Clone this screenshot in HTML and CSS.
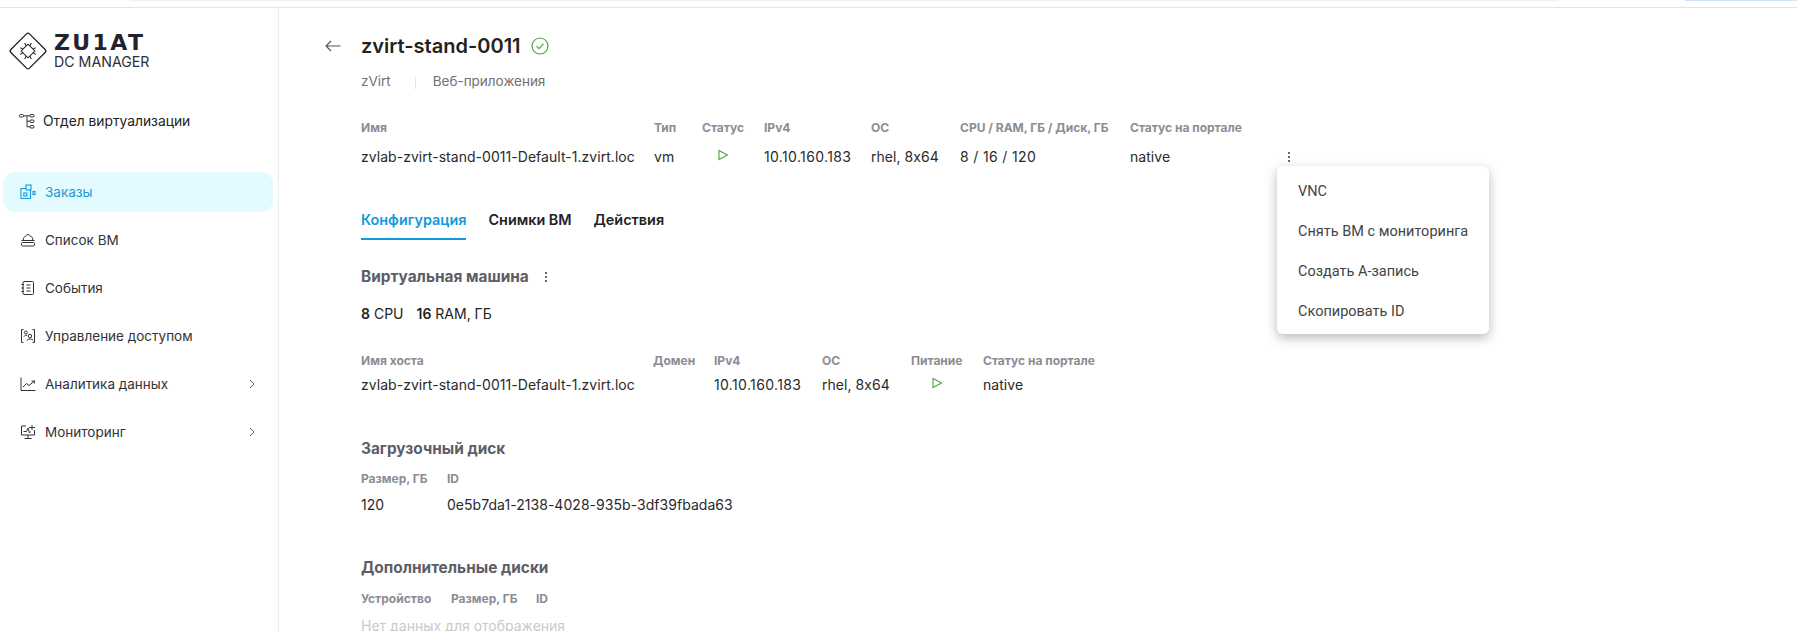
FILE: index.html
```html
<!DOCTYPE html>
<html lang="ru">
<head>
<meta charset="utf-8">
<title>zvirt-stand-0011</title>
<link rel="stylesheet" href="styles.css">
</head>
<body>
<div class="topstrip"><span class="strip-a"></span><span class="strip-b"></span></div>
<div class="app">
  <aside class="sidebar">
    <div class="logo">
      <svg class="logo-mark" viewBox="0 0 38 38" width="38" height="38" fill="none" stroke="#23232f" stroke-width="1.3">
        <rect x="6.500" y="6.500" width="25" height="25" rx="2" transform="rotate(45 19 19)"/>
        <path d="M19 12.500l6.500 6.500-6.500 6.500-6.500-6.500z" stroke-width="1"/>
        <path d="M15.800 11.500l1.500 2.800M22.200 11.500l-1.500 2.800M15.800 26.500l1.500-2.800M22.200 26.500l-1.500-2.800M11.500 15.800l2.800 1.500M11.500 22.200l2.800-1.500M26.500 15.800l-2.800 1.500M26.500 22.200l-2.800-1.500" stroke-width="1"/>
      </svg>
      <div class="logo-text">
        <div class="logo-word">ZU1AT</div>
        <div class="logo-sub">DC MANAGER</div>
      </div>
    </div>
    <div class="org">
      <svg class="icon" viewBox="0 0 16 16" width="16" height="16" fill="none" stroke="#333" stroke-width="1">
        <rect x="0.500" y="1.500" width="4" height="2.500" rx="1"/><rect x="11" y="1.500" width="4" height="2.500" rx="1"/><rect x="11" y="7" width="4" height="2.500" rx="1"/><rect x="11" y="12.500" width="4" height="2.500" rx="1"/>
        <path d="M4.500 2.800H11M8 2.800V13.800H11M8 8.200H11"/>
      </svg>
      <span>Отдел виртуализации</span>
    </div>
    <nav class="nav">
      <a class="nav-item active">
        <svg class="icon" viewBox="0 0 16 16" width="16" height="16" fill="none" stroke="#0f9bdc" stroke-width="1.100"><path d="M6 4.500H1V14.500H10.500V6"/><rect x="6" y="1" width="5" height="5"/><rect x="3.800" y="9" width="3" height="3"/><rect x="13" y="7.500" width="2" height="3"/></svg>
        <span>Заказы</span>
      </a>
      <a class="nav-item">
        <svg class="icon" viewBox="0 0 16 16" width="16" height="16" fill="none" stroke="#333" stroke-width="1"><path d="M3.500 8.500C2.500 6 4.500 4.500 5.500 4.500 6 2 10 2 10.500 4.500 12 4.500 13.500 6 12.500 8.500"/><path d="M1.500 8.500H14.500"/><rect x="1.500" y="10.500" width="13" height="3.500" rx="1"/></svg>
        <span>Список ВМ</span>
      </a>
      <a class="nav-item">
        <svg class="icon" viewBox="0 0 16 16" width="16" height="16" fill="none" stroke="#333" stroke-width="1"><rect x="3" y="1.500" width="10.500" height="13" rx="1"/><path d="M1.500 4.500H4M1.500 8H4M1.500 11.500H4M6.500 5H10.500M6.500 8H10.500M6.500 11H10.500"/></svg>
        <span>События</span>
      </a>
      <a class="nav-item">
        <svg class="icon" viewBox="0 0 16 16" width="16" height="16" fill="none" stroke="#333" stroke-width="1"><path d="M3.500 1.500H1.500V14.500H3.500M12.500 1.500H14.500V14.500H12.500"/><circle cx="5.800" cy="4.500" r="1.500"/><circle cx="10" cy="8" r="1.700"/><path d="M7 12.500C7 10.500 13 10.500 13 12.500M4 8.500C4.500 7.500 6 7 7 7.500"/></svg>
        <span>Управление доступом</span>
      </a>
      <a class="nav-item">
        <svg class="icon" viewBox="0 0 16 16" width="16" height="16" fill="none" stroke="#333" stroke-width="1"><path d="M1 1.500V14.500H15.500"/><path d="M3 11L6.500 7.500 9 9.500 14.500 5M11.500 5H14.500V7.500"/></svg>
        <span>Аналитика данных</span>
        <svg class="chev" viewBox="0 0 8 10" width="8" height="10" fill="none" stroke="#666" stroke-width="1"><path d="M2 1L6 5 2 9"/></svg>
      </a>
      <a class="nav-item">
        <svg class="icon" viewBox="0 0 16 16" width="16" height="16" fill="none" stroke="#333" stroke-width="1"><path d="M6 2H1.500V11H14.500V6M8 11V14.500M4.500 14.500H11.500"/><path d="M3.500 7.500H6.500L8 4 9.500 9 10.500 7.500M9 3.500H15M12 1V6"/></svg>
        <span>Мониторинг</span>
        <svg class="chev" viewBox="0 0 8 10" width="8" height="10" fill="none" stroke="#666" stroke-width="1"><path d="M2 1L6 5 2 9"/></svg>
      </a>
    </nav>
  </aside>
  <main class="main">
    <header class="title-row">
      <svg class="back" viewBox="0 0 16 12" width="16" height="12" fill="none" stroke="#555" stroke-width="1.200"><path d="M15.500 6H1M6 1L1 6 6 11"/></svg>
      <h1>zvirt-stand-0011</h1>
      <svg class="ok" viewBox="0 0 18 18" width="18" height="18" fill="none" stroke="#4aa93a" stroke-width="1.200"><circle cx="9" cy="9" r="8"/><path d="M5.500 9.200L8 11.700 12.500 6.700"/></svg>
    </header>
    <div class="crumbs"><span>zVirt</span><i class="crumb-sep"></i><span>Веб-приложения</span></div>

    <div class="grid grid-top">
      <div class="th">Имя</div><div class="th">Тип</div><div class="th">Статус</div><div class="th">IPv4</div><div class="th">ОС</div><div class="th">CPU / RAM, ГБ / Диск, ГБ</div><div class="th">Статус на портале</div><div></div>
      <div class="td">zvlab-zvirt-stand-0011-Default-1.zvirt.loc</div><div class="td">vm</div>
      <div class="td td-play"><svg viewBox="0 0 12 12" width="12" height="12" fill="none" stroke="#4aa93a" stroke-width="1.100"><path d="M2 1.500L10.500 6 2 10.500z"/></svg></div>
      <div class="td num">10.10.160.183</div><div class="td">rhel, 8x64</div><div class="td num">8 / 16 / 120</div><div class="td">native</div>
      <div class="td td-kebab"><span class="kebab"><b></b><b></b><b></b></span></div>
    </div>

    <div class="menu">
      <div class="menu-item">VNC</div>
      <div class="menu-item">Снять ВМ с мониторинга</div>
      <div class="menu-item">Создать А-запись</div>
      <div class="menu-item">Скопировать ID</div>
    </div>

    <div class="tabs">
      <a class="tab current">Конфигурация</a>
      <a class="tab">Снимки ВМ</a>
      <a class="tab">Действия</a>
    </div>

    <section class="vm">
      <div class="sec-head"><h2>Виртуальная машина</h2><span class="kebab"><b></b><b></b><b></b></span></div>
      <div class="specs"><span><b>8</b> CPU</span><span><b>16</b> RAM, ГБ</span></div>
      <div class="grid grid-vm">
        <div class="th">Имя хоста</div><div class="th">Домен</div><div class="th">IPv4</div><div class="th">ОС</div><div class="th">Питание</div><div class="th">Статус на портале</div>
        <div class="td">zvlab-zvirt-stand-0011-Default-1.zvirt.loc</div><div class="td"></div><div class="td num">10.10.160.183</div><div class="td">rhel, 8x64</div>
        <div class="td td-play2"><svg viewBox="0 0 12 12" width="12" height="12" fill="none" stroke="#4aa93a" stroke-width="1.100"><path d="M2 1.500L10.500 6 2 10.500z"/></svg></div>
        <div class="td">native</div>
      </div>
    </section>

    <section class="disk">
      <h2>Загрузочный диск</h2>
      <div class="grid grid-boot">
        <div class="th">Размер, ГБ</div><div class="th">ID</div>
        <div class="td">120</div><div class="td">0e5b7da1-2138-4028-935b-3df39fbada63</div>
      </div>
    </section>

    <section class="disk extra">
      <h2>Дополнительные диски</h2>
      <div class="grid grid-extra">
        <div class="th">Устройство</div><div class="th">Размер, ГБ</div><div class="th">ID</div>
      </div>
      <div class="empty">Нет данных для отображения</div>
    </section>
  </main>
</div>
</body>
</html>
```
FILE: styles.css
```css
* { box-sizing: border-box; }
html, body { margin: 0; height: 100%; overflow: hidden; }
body { font-family: Inter, "Noto Sans", sans-serif; font-size: 14px; color: #222; background: #fff; font-feature-settings: "calt" 0; }
.topstrip { height: 8px; border-bottom: 1px solid #e4e4e6; display: flex; align-items: flex-start; }
.strip-a { margin-left: 130px; width: 1428px; height: 1px; background: #eaf1fa; }
.strip-b { margin-left: 127px; width: 112px; height: 1px; background: #cfe1fb; }
.app { display: flex; height: 623px; }

.sidebar { width: 279px; flex: none; border-right: 1px solid #ececee; padding-right: 1px; }
.logo { display: flex; align-items: center; gap: 6px; padding: 21px 0 0 8px; height: 64px; }
.logo-mark { flex: none; width: 40px; height: 40px; }
.logo-word { font-family: "DejaVu Sans", sans-serif; font-weight: 700; font-size: 22px; line-height: 23px; letter-spacing: 2.400px; color: #23232f; }
.logo-sub { font-size: 14.200px; line-height: 16px; color: #2e2e3a; }
.org { display: flex; align-items: center; gap: 8px; margin: 39px 0 0 19px; height: 20px; font-size: 13.800px; color: #222; }
.nav { margin-top: 41px; display: flex; flex-direction: column; gap: 8px; padding-left: 3px; }
.nav-item { display: flex; align-items: center; gap: 9px; height: 40px; width: 270px; padding: 0 15px 0 17px; border-radius: 12px; font-size: 13.500px; color: #333; }
.nav-item span { flex: 1; }
.nav-item .icon { flex: none; }
.nav-item.active { background: #e3faff; color: #1c9ad6; }
.chev { flex: none; margin-right: 2px; }

.main { position: relative; flex: 1; padding: 0 0 0 46px; min-width: 0; }
.title-row { display: flex; align-items: center; height: 26px; margin-top: 25px; }
.back { flex: none; margin-right: 20px; }
h1 { margin: 0; font-size: 20px; font-weight: 600; color: #222; }
.ok { margin-left: 10px; flex: none; }
.crumbs { display: flex; align-items: center; margin: 12px 0 0 36px; color: #707078; font-size: 13.500px; line-height: 20px; height: 20px; }
.crumb-sep { width: 1px; height: 12px; background: #e4e4e6; margin: 3px 17px 0 24px; }

.grid { display: grid; }
.th { font-size: 12px; font-weight: 700; color: #8c8c94; line-height: 16px; white-space: nowrap; }
.td { font-size: 14px; letter-spacing: 0.040px; line-height: 20px; color: #2a2a2a; margin-top: 11px; white-space: nowrap; }
.td.num { letter-spacing: 0.350px; }
.grid-top { margin: 29px 0 0 36px; grid-template-columns: 293px 48px 62px 107px 89px 170px 158px 30px; }
.td-play { padding-left: 15px; }
.td-play svg, .td-play2 svg { display: block; margin-top: 2px; }
.td-play2 { padding-left: 20px; }
.td-kebab { margin-top: 3px; }
.kebab { display: inline-flex; flex-direction: column; gap: 2px; width: 3px; }
.kebab b { display: block; width: 2px; height: 2px; border-radius: 50%; background: #333; }

.menu { position: absolute; left: 998px; top: 158px; width: 212px; height: 168px; background: #fff; border-radius: 6px; box-shadow: 0 4px 12px rgba(0,0,0,0.28); padding: 6px 0; font-family: Roboto, sans-serif; font-size: 14.500px; color: #444; z-index: 2; }
.menu-item { height: 40px; line-height: 40px; padding-left: 21px; white-space: nowrap; }

.tabs { display: flex; gap: 22px; margin: 40px 0 0 36px; height: 33px; }
.tab { font-size: 14.400px; font-weight: 600; color: #222; line-height: 20px; height: 33px; padding-top: 3px; white-space: nowrap; }
.tab.current { color: #0f9bdc; border-bottom: 2px solid #0f9bdc; }

h2 { margin: 0; font-size: 15.400px; font-weight: 700; line-height: 20px; color: #5d5d66; }
.vm { margin: 27px 0 0 36px; }
.sec-head { display: flex; align-items: center; gap: 16px; height: 20px; }
.specs { display: flex; gap: 13px; margin-top: 17px; line-height: 20px; font-size: 14px; }
.specs b { font-weight: 600; }
.grid-vm { margin-top: 29px; grid-template-columns: 292px 61px 108px 89px 72px 140px; }
.grid-vm .td { margin-top: 6px; }
.disk { margin: 44px 0 0 36px; }
.disk.extra { margin-top: 43px; }
.grid-boot { margin-top: 12px; grid-template-columns: 86px 400px; }
.grid-boot .td { margin-top: 8px; }
.grid-extra { margin-top: 13px; grid-template-columns: 90px 85px 60px; }
.empty { margin-top: 9px; color: #c9c9cd; font-size: 14px; line-height: 20px; }
```
